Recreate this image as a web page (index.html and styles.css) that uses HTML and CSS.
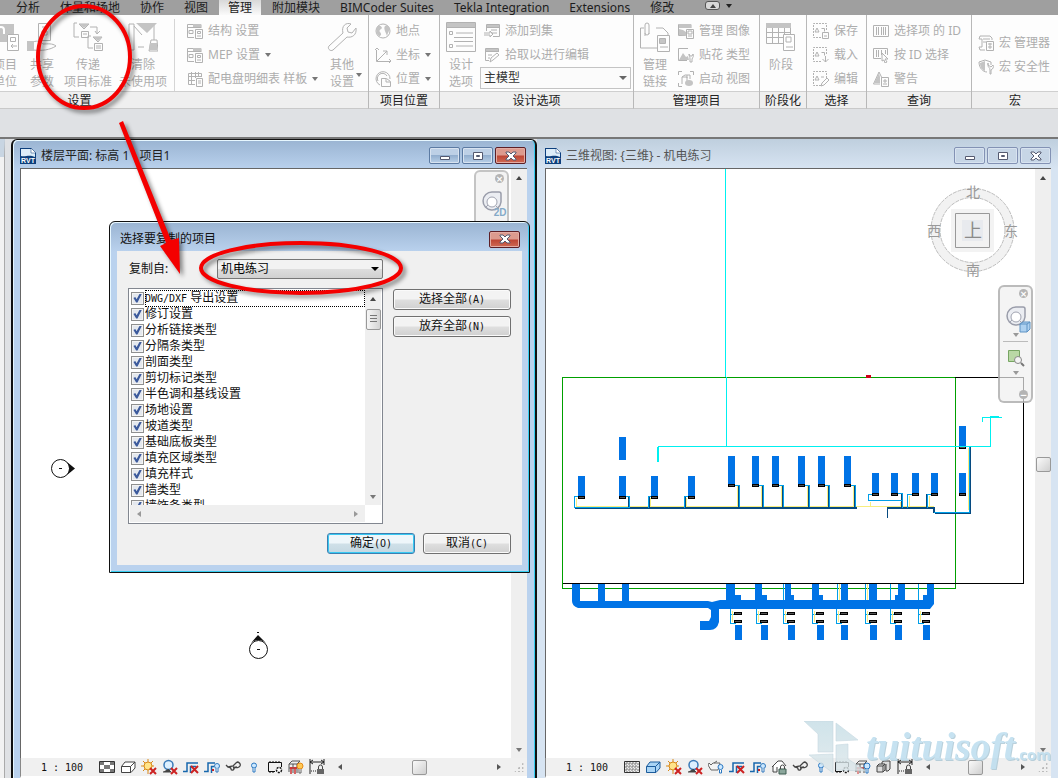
FILE: index.html
```html
<!DOCTYPE html>
<html lang="zh-CN">
<head>
<meta charset="utf-8">
<title>机电练习</title>
<link rel="stylesheet" href="styles.css">
</head>
<body>
<svg class="defs" aria-hidden="true">
  <defs>
    <linearGradient id="mark" x1="0" y1="0" x2="0" y2="1"><stop offset="0" stop-color="#c4dde6"/><stop offset="1" stop-color="#dde7ea"/></linearGradient>
    <!-- ribbon icons -->
    <symbol id="r-units" viewBox="0 0 30 30"><path class="gf" d="M2 2h22v18H2z"/><path class="w" d="M7 12V8a4 4 0 0 1 8 0v4h-2V8a2 2 0 0 0-4 0v4zM17 12h12v17H17z"/><path class="g" d="M17.500 12.500h11v16h-11zM20.500 15.500h5v4h-5zM27 24h-6m2-2-2 2 2 2"/></symbol>
    <symbol id="r-share" viewBox="0 0 30 30"><path class="g" d="M11.500 1.500h12v17h-12zM15 5h5M15 9h5v4h-5zM6 20c5-2 8 0 10 2 5 0 9-1 13 2-6 4-14 5-23 4"/><path class="gf" d="M0 19h7v10H0z"/></symbol>
    <symbol id="r-transfer" viewBox="0 0 30 30"><path class="g" d="M4 1H1v14h5M6 2h10l-5 5zM8.500 9.500h7v6h-7zM10 12h4M17 5h7v6m-2-2 2 3 3-3M18 14h-3v12h5M20 15h9l-4 5zM21.500 21.500h8v7h-8zM23 24h5M23 26h5"/><path class="gf" d="M6 2h10l-5 4zM20 15h9l-4 4z"/></symbol>
    <symbol id="r-purge" viewBox="0 0 30 30"><path class="g" d="M5 2H1v26h5V2zM6 4l8 9M10 25h6M26 2v16M25 18h4l1 11H21l2-11z"/><path class="gf" d="M8 1h21L19 11zM22 21h7v7h-8z"/></symbol>
    <symbol id="r-wrench" viewBox="0 0 30 30"><path class="g" d="M2 24 16 11C14 4 19 0 24 2l-4 4 1 4 4 1 4-5c1 7-4 10-9 9L6 28c-3 2-6-2-4-4z"/></symbol>
    <symbol id="r-list" viewBox="0 0 30 30"><path class="g" d="M.5.5h29v29H.5zM1 5.500h28M3.500 9.500h3v3h-3zM3.500 22.500h3v3h-3zM10 11h17M8 15.500h19M8 19.500h19M10 24h17"/><path class="gf" d="M1 1h28v4H1z"/></symbol>
    <symbol id="r-link" viewBox="0 0 30 30"><path class="g" d="M16 6h7l5 5v3M17 26H.5V6H4M5 14V3a2 2 0 0 1 4 0v9m-4-1a2 2 0 0 0 4 0M17.500 13.500h12v16h-12zM19.500 16.500h6v5h-6zM20 25h8"/><path class="gf" d="M20 17h5v4h-5z"/></symbol>
    <symbol id="r-phase" viewBox="0 0 30 30"><path class="g" d="M.5 1.500h24v20H.5zM1 10.500h23M1 15.500h23M6.500 6v15M12.500 6v15M18.500 6v15"/><path class="gf" d="M0 1h25v5H0z"/><path class="w" d="M17 12h12v17H17z"/><path class="g" d="M17.500 12.500h11v16h-11zM20 15h5v5h-5zM20 25h7"/></symbol>
    <symbol id="i-form" viewBox="0 0 16 16"><path class="g" d="M14 5V1.500H.5v13H7M1 4.500h13M2 7.500h4v3H2zM8.500 6.500h7v9h-7zM10.500 8.500h3v2h-3zM10 13h4"/><path class="gf" d="M6 1h8v3H6z"/></symbol>
    <symbol id="i-table" viewBox="0 0 16 16"><path class="g" d="M8 13.500H1.500v-11h13V6M1 5.500h14M1 9.500h7M4.500 1v12M8.500 1v6M11.500 1v5M9.500 7.500h6v8h-6zM11 10h3M11 12h3"/></symbol>
    <symbol id="i-globe" viewBox="0 0 16 16"><circle class="g" cx="8" cy="8" r="7"/><path class="gf" d="M2 4c3-3 5 0 5 1s-4 2-2 4 1 4-1 4C1 11 1 7 2 4zM13 3c4 3 0 5-1 10-1-4-4-7-2-10 1-1 2-1 3 0z"/></symbol>
    <symbol id="i-axis" viewBox="0 0 16 16"><path class="g" d="M1.500 3v11.500H15M2 14 12 4M8 4h4v4M0 3l2-2 2 2M14 12l2 2-2 2"/></symbol>
    <symbol id="i-place" viewBox="0 0 16 16"><path class="g" d="M5 14A7 7 0 1 1 15 8M3 10a5 5 0 0 1 9-5M6.500 7.500h5l4 3v5h-9zM11 8v3h4"/></symbol>
    <symbol id="i-add" viewBox="0 0 16 16"><path class="g" d="M2.500 8V1.500h13v12H9M3 4.500h12M7 7h6M7 10h6M0 10h6V8l3 3-3 3v-2H0"/><path class="gf" d="M3 2h12v2H3z"/></symbol>
    <symbol id="i-pick" viewBox="0 0 16 16"><path class="g" d="M5 13.500H1.500v-12h13V5M2 4.500h12M4 8h4M4 11h2M6 15l1-4 6-5 2 2-6 5z"/><path class="gf" d="M2 2h12v2H2z"/></symbol>
    <symbol id="i-image" viewBox="0 0 16 16"><path class="g" d="M13 5V1.500H.5v11H7M8.500 6.500h7v9h-7zM10 8h4v3h-4zM10 13h4"/><path class="gf" d="M1 12V6l4 1 3 2v4zM1 1h12v4H1z"/></symbol>
    <symbol id="i-decal" viewBox="0 0 16 16"><path class="g" d="M10 1.500H.5v12H9M11 7c0 3 1 2 1 5v3h2v-3c1-2 2-3 1-5l-1 2h-2z"/><path class="gf" d="m1 13 4-7 3 4 2-1 1 4z"/></symbol>
    <symbol id="i-start" viewBox="0 0 16 16"><path class="g" d="M.5 4V.5H4M12 .5h3.500V4M.5 12v3.500H4M4 13V6l3-2h5v4M4 6h5v5M9 4v3"/><ellipse class="gf" cx="11" cy="12" rx="4" ry="3"/></symbol>
    <symbol id="i-save" viewBox="0 0 16 16"><path class="g" stroke-dasharray="2 1" d="M8 14.500H.5V.5h13V7"/><path class="g" d="m2 9 2-4 2 4zM8.500 5.500h3v3M9.500 9.500h6v6h-6zM11 13h3"/></symbol>
    <symbol id="i-load" viewBox="0 0 16 16"><path class="g" stroke-dasharray="2 1" d="M8 14.500H.5V.5h13V7"/><path class="g" d="m2 9 2-4 2 4zM8.500 5.500h3v3M12.500 9v6m-3-3 3 3 3-3"/></symbol>
    <symbol id="i-edit" viewBox="0 0 16 16"><path class="g" stroke-dasharray="2 1" d="M8 14.500H.5V.5h13V7"/><path class="g" d="m2 9 2-4 2 4zM8 6h3M8 15l1-3 5-5 2 2-5 5z"/></symbol>
    <symbol id="i-id" viewBox="0 0 16 16"><path class="g" d="M.5 2.500h15v11H.5zM3.500 4v8M5.500 4v8M8.500 4v8M10.500 4v8M12.500 4v8"/></symbol>
    <symbol id="i-idsel" viewBox="0 0 16 16"><path class="g" d="M8 11.500H.5v-10h14V8M3.500 3v7M5.500 3v7M8.500 3v5M12.500 3v4M9 6l6 6-3 0 2 3-2 1-1-3-2 1z"/></symbol>
    <symbol id="i-warn" viewBox="0 0 16 16"><path class="g" d="M7 13H.5L6 1l3 6M8.500 6.500h7v9h-7zM11 9h2v2h-2zM10 13h4"/><path class="gf" d="M6 2 1 12h6V6z"/></symbol>
    <symbol id="i-macro" viewBox="0 0 16 16"><path class="g" d="M14 5V3L12 1H2L1 4h3v8H1l1 3h5M5 4h7M5 7h3M8.500 6.500h7v9h-7zM10 9h4M10 12h4M12 8v6"/></symbol>
    <symbol id="i-shield" viewBox="0 0 16 16"><path class="g" d="M9 13c-4 0-8-4-8-10l6-2 6 2v3M10 6c0 3 2 2 2 5v4h1v-4c2-1 3-3 2-5l-2 2z"/><path class="gf" d="M7 2 2 4c0 4 2 7 5 8zM9 4h2v2H9z"/></symbol>
    <!-- view control bar icons -->
    <symbol id="s-detail" viewBox="0 0 16 16"><path d="M.5 2.500h15v11H.5z" fill="#fff" stroke="#333"/><path d="M1 3h4v3H1zm10 0h4v3h-4zM5 6h6v4H5zM1 10h4v3H1zm10 0h4v3h-4z" fill="#777"/></symbol>
    <symbol id="s-fine" viewBox="0 0 16 16"><path d="M.5 2.500h15v11H.5z" fill="#eee" stroke="#333"/><path d="M1 5h14M1 8h14M1 11h14M3 3v10M6 3v10M9 3v10M12 3v10" stroke="#777" stroke-dasharray="2 1"/></symbol>
    <symbol id="s-box" viewBox="0 0 16 16"><path d="M1.500 7.500 5 3h10v6l-4 4.500H1.500zM1.500 7.500h9V13M10.500 7.500 15 3" fill="#fff" stroke="#444"/></symbol>
    <symbol id="s-shade" viewBox="0 0 16 16"><path d="M1.500 7.500 5 3h10v6l-4 4.500H1.500zM1.500 7.500h9V13M10.500 7.500 15 3" fill="#a9d4f5" stroke="#1c5c9c"/></symbol>
    <symbol id="s-sun" viewBox="0 0 16 16"><path d="M7 0v15M0 7h13M2 2l10 10M12 2 2 12" stroke="#d88a1a"/><circle cx="7" cy="7" r="4" fill="#ffe48a" stroke="#d88a1a"/><path d="m9 9 6 6m0-6-6 6" stroke="#c22" stroke-width="2"/></symbol>
    <symbol id="s-shadow" viewBox="0 0 16 16"><circle cx="6.500" cy="6" r="4.500" fill="#dcefff" stroke="#3a7ab8" stroke-width="1.500"/><path d="M1 13h8l-3-3" fill="#444" stroke="#444"/><path d="m9 9 6 6m0-6-6 6" stroke="#c22" stroke-width="2"/></symbol>
    <symbol id="s-crop" viewBox="0 0 16 16"><path d="M0 12.500h4V4h11M7.500 14V7.500H13M4 11V4" fill="none" stroke="#1767ad" stroke-width="1.500"/><path d="m8 7 7 7m0-7-7 7" stroke="#c22" stroke-width="2"/></symbol>
    <symbol id="s-region" viewBox="0 0 16 16"><path d="M0 12.500h4V4h7M7.500 14V7.500H10" fill="none" stroke="#1767ad" stroke-width="1.500"/><circle cx="13" cy="7" r="2.500" fill="#cce8ff" stroke="#3279bd"/><path d="M12 9.500V13h2V9.500" fill="#fff" stroke="#3279bd"/><path d="M8 11h2" stroke="#c22" stroke-width="2"/></symbol>
    <symbol id="s-glasses" viewBox="0 0 16 16"><path d="m1 6 2 2c2 0 3 1 3 2s2 2 3 0 0-2-1-2M12 3c2 0 4 2 3 4s-4 2-5 1M3 8l5-1 4-4M8 9l4-1" fill="none" stroke="#444" stroke-width="1.300"/></symbol>
    <symbol id="s-bulb" viewBox="0 0 16 16"><circle cx="8" cy="6.500" r="2.500" fill="#cce8ff" stroke="#2b78c2"/><path d="M7 9v4h2V9" fill="#fff" stroke="#2b78c2"/></symbol>
    <symbol id="s-temp" viewBox="0 0 16 16"><path d="M8 12.500H1.500v-9h13V8M3 2v2M6 2v2M9 2v2M12 2v2M3 12v2M6 12v2" fill="none" stroke="#111"/><circle cx="12" cy="11" r="2.500" fill="#fff" stroke="#111" stroke-width="1.500" stroke-dasharray="2 1"/></symbol>
    <symbol id="s-analyt" viewBox="0 0 16 16"><path d="M1 13V5l3-3h8L9 5H1m8 0v9M5 5v9M1 9h8" fill="none" stroke="#555"/><path d="M2 9h7M3 8v7M7 8v7" stroke="#c33" stroke-width="1.500"/><circle cx="12" cy="7" r="3" fill="#ffc955" stroke="#e58a16"/><path d="M11 10v4h2v-4" fill="#fff" stroke="#666"/></symbol>
    <symbol id="s-analytb" viewBox="0 0 16 16"><path d="M1 13V5l3-3h8L9 5H1m8 0v9M5 5v9M1 9h8" fill="none" stroke="#555"/><path d="M2 9h7M3 8v7" stroke="#c33"/><circle cx="12" cy="7" r="3" fill="#cce8ff" stroke="#2b78c2"/><path d="M11 10v4h2v-4" fill="#fff" stroke="#2b78c2"/></symbol>
    <symbol id="s-reveal" viewBox="0 0 16 16"><path d="M1 0v15M15 0v6M1 3h14M4 1 1 3l3 2M12 1l3 2-3 2" fill="none" stroke="#222"/><path d="M2 12h5" stroke="#222" stroke-dasharray="1 1"/><path d="M8 10h7v5H8z" fill="#666"/><path d="M9.500 10V8a2 2 0 0 1 4 0v2" fill="none" stroke="#444"/></symbol>
    <symbol id="s-render" viewBox="0 0 16 16"><path d="M3 6 1 4 0 6l3 5h7l2-7H5zM6 4l3-2" fill="#f4f4f4" stroke="#666"/><circle cx="12.500" cy="8" r="2.500" fill="#cce8ff" stroke="#2b78c2"/><path d="M11.500 11v3h2v-3" fill="#fff" stroke="#2b78c2"/></symbol>
    <symbol id="s-lock" viewBox="0 0 16 16"><path d="M2 13V7L1 8l6-6h4l4 5M2 13h4V8" fill="#fff" stroke="#444"/><path d="M8 10h7v5H8z" fill="#8ba69b" stroke="#3d5c50"/><path d="M9.500 10V8a2 2 0 0 1 4 0v2" fill="none" stroke="#444"/></symbol>
    <symbol id="s-set" viewBox="0 0 16 16"><path d="M1 7h6v6H1zM1 7l2-2h6L7 7M7 13l2-2V5M6 5V3l2-1h6v8l-2 2h-2V5" fill="#ddd" stroke="#444"/></symbol>
    <symbol id="rvt" viewBox="0 0 16 16"><path d="M0 0h11l5 5v11H0z" fill="#0d3f7d"/><path d="M1 1h10v4h4v4C9 6 6 9 1 8z" fill="#dcecf8"/><path d="M11 0v5h5z" fill="#fff" stroke="#0d3f7d" stroke-width=".5"/><text x="8" y="14.500" text-anchor="middle" class="rvt-text">RVT</text></symbol>
    <symbol id="wheel" viewBox="0 0 24 24"><path d="M12 2h7q2 0 2 2v8a9 9 0 1 1-9-10z" fill="#ebedf2" stroke="#9a9daa" stroke-width="1.500"/><circle cx="12" cy="12" r="5" fill="#fff" stroke="#a0a3b0"/><path d="m5 18 3-3M16 16l3 3" stroke="#a0a3b0"/></symbol>
    <symbol id="c-min" viewBox="0 0 12 10"><path d="M1.500 5.500h9v3h-9z" class="cap"/></symbol>
    <symbol id="c-max" viewBox="0 0 12 10"><path d="M1.500 1.500h9v7h-9zM4.500 4.500h3v1h-3z" class="cap"/></symbol>
    <symbol id="c-close" viewBox="0 0 12 10"><path d="M1 1h3l2 2 2-2h3v1L8 5l3 3v1H8L6 7 4 9H1V8l3-3-3-3z" class="cap"/></symbol>
    <!-- drawing parts -->
    <g id="t-a"><path class="duct" d="M-4 0h7v20h-7z"/><path class="term" d="M-3.500 20.500h6v2h-6z"/></g>
    <g id="t-b"><path class="duct" d="M-4 0h7v28h-7z"/><path class="term" d="M-3.500 28.500h6v2h-6z"/><path class="hot" d="M5.500 30v20"/><path class="warm" d="M3 29.500h4.500v21"/><path class="cold" d="M6.500 30v21"/></g>
    <g id="t-c"><path class="warm" d="M-7.500 24v15.500h5M-7 30h5"/><path class="hot" d="M-5.500 27v11"/><path class="duct" d="M-3 11h6v14h-6zM-3 41h7v15h-7z"/><path class="term" d="M-3.500 28.500h7v2h-7zM-3.500 36.500h7v2h-7z"/></g>
  </defs>
</svg>

<nav class="tabs">
  <a href="#">分析</a><a href="#">体量和场地</a><a href="#">协作</a><a href="#">视图</a><a href="#" class="on">管理</a><a href="#">附加模块</a><a href="#">BIMCoder Suites</a><a href="#">Tekla Integration</a><a href="#">Extensions</a><a href="#">修改</a>
  <button class="mini" aria-label="最小化功能区"><i class="up"></i></button><i class="down dark"></i>
</nav>

<header class="ribbon">
  <section class="panel">
    <div class="tools first">
      <button class="big"><svg><use href="#r-units"/></svg>项目<br>单位</button>
      <button class="big"><svg><use href="#r-share"/></svg>共享<br>参数</button>
      <button class="big"><svg><use href="#r-transfer"/></svg>传递<br>项目标准</button>
      <button class="big"><svg><use href="#r-purge"/></svg>清除<br>未使用项</button>
      <div class="stack ruled">
        <button class="small"><svg><use href="#i-form"/></svg>结构 设置</button>
        <button class="small"><svg><use href="#i-form"/></svg>MEP 设置<i class="down"></i></button>
        <button class="small"><svg><use href="#i-table"/></svg>配电盘明细表 样板<i class="down"></i></button>
      </div>
      <button class="big menu"><svg><use href="#r-wrench"/></svg>其他<br>设置<i class="down"></i></button>
    </div>
    <h2 class="settings">设置</h2>
  </section>
  <section class="panel">
    <div class="tools">
      <div class="stack">
        <button class="small"><svg><use href="#i-globe"/></svg>地点</button>
        <button class="small"><svg><use href="#i-axis"/></svg>坐标<i class="down"></i></button>
        <button class="small"><svg><use href="#i-place"/></svg>位置<i class="down"></i></button>
      </div>
    </div>
    <h2>项目位置</h2>
  </section>
  <section class="panel">
    <div class="tools">
      <button class="big"><svg><use href="#r-list"/></svg>设计<br>选项</button>
      <div class="stack wide">
        <button class="small"><svg><use href="#i-add"/></svg>添加到集</button>
        <button class="small"><svg><use href="#i-pick"/></svg>拾取以进行编辑</button>
        <span class="combo"><select aria-label="设计选项"><option>主模型</option></select></span>
      </div>
    </div>
    <h2>设计选项</h2>
  </section>
  <section class="panel">
    <div class="tools">
      <button class="big"><svg><use href="#r-link"/></svg>管理<br>链接</button>
      <div class="stack">
        <button class="small"><svg><use href="#i-image"/></svg>管理 图像</button>
        <button class="small"><svg><use href="#i-decal"/></svg>贴花 类型</button>
        <button class="small"><svg><use href="#i-start"/></svg>启动 视图</button>
      </div>
    </div>
    <h2>管理项目</h2>
  </section>
  <section class="panel">
    <div class="tools"><button class="big"><svg><use href="#r-phase"/></svg>阶段</button></div>
    <h2>阶段化</h2>
  </section>
  <section class="panel">
    <div class="tools">
      <div class="stack">
        <button class="small"><svg><use href="#i-save"/></svg>保存</button>
        <button class="small"><svg><use href="#i-load"/></svg>载入</button>
        <button class="small"><svg><use href="#i-edit"/></svg>编辑</button>
      </div>
    </div>
    <h2>选择</h2>
  </section>
  <section class="panel">
    <div class="tools">
      <div class="stack">
        <button class="small"><svg><use href="#i-id"/></svg>选择项 的 ID</button>
        <button class="small"><svg><use href="#i-idsel"/></svg>按 ID 选择</button>
        <button class="small"><svg><use href="#i-warn"/></svg>警告</button>
      </div>
    </div>
    <h2>查询</h2>
  </section>
  <section class="panel">
    <div class="tools">
      <div class="stack middle">
        <button class="small"><svg><use href="#i-macro"/></svg>宏 管理器</button>
        <button class="small"><svg><use href="#i-shield"/></svg>宏 安全性</button>
      </div>
    </div>
    <h2>宏</h2>
  </section>
</header>

<main class="desk">
  <aside class="dock"></aside>

  <section class="win active">
    <header class="caption">
      <svg class="doc"><use href="#rvt"/></svg><h1>楼层平面: 标高 1 - 项目1</h1>
      <button aria-label="最小化"><svg><use href="#c-min"/></svg></button><button aria-label="最大化"><svg><use href="#c-max"/></svg></button><button class="close" aria-label="关闭"><svg><use href="#c-close"/></svg></button>
    </header>
    <div class="client">
      <div class="view">
        <svg class="drawing"><g transform="translate(-21 -169)">
          <g fill="none" stroke="#111"><circle cx="60.500" cy="468.500" r="9"/><circle cx="258.500" cy="649.500" r="9"/><path d="M59 468.500h3M257 649.500h3M257 632.500h2"/></g>
          <path d="m67 462 8 6.500-8 6.500c3-4 3-9 0-13zM251 643l7-8 8 8c-5-4-10-4-15 0z" fill="#111"/>
        </g></svg>
        <div class="navbar flat">
          <button class="x" aria-label="关闭导航栏">×</button>
          <button class="wheel" aria-label="二维控制盘"><svg><use href="#wheel"/></svg><b>2D</b></button>
        </div>
      </div>
      <div class="vscroll"><i class="up"></i><i class="down"></i></div>
    </div>
    <footer class="status">
      <span class="scale">1 : 100</span>
      <svg><use href="#s-detail"/></svg><svg><use href="#s-box"/></svg><svg><use href="#s-sun"/></svg><svg><use href="#s-shadow"/></svg><svg><use href="#s-crop"/></svg><svg><use href="#s-region"/></svg><svg><use href="#s-glasses"/></svg><svg><use href="#s-bulb"/></svg><svg><use href="#s-temp"/></svg><svg><use href="#s-analyt"/></svg><svg><use href="#s-reveal"/></svg>
      <div class="hscroll"><i class="left"></i><b class="thumb"></b><i class="right"></i></div><span class="grip"></span>
    </footer>
  </section>

  <section class="win">
    <header class="caption">
      <svg class="doc"><use href="#rvt"/></svg><h1>三维视图: {三维} - 机电练习</h1>
      <button aria-label="最小化"><svg><use href="#c-min"/></svg></button><button aria-label="最大化"><svg><use href="#c-max"/></svg></button><button aria-label="关闭"><svg><use href="#c-close"/></svg></button>
    </header>
    <div class="client">
      <div class="view">
        <svg class="drawing"><g transform="translate(-546 -169)">
          <g fill="none" shape-rendering="crispEdges">
            <path stroke="#00a000" d="M562.500 377.500h393v211h-393z"/>
            <path stroke="#000" d="M563 583.500h460.500v-206H955"/>
            <path stroke="#00f0f0" d="M725.500 169v208M726.500 377v69.500M658.500 462v-15.500h332v-29M982.500 422v-4.500h19"/>
            <path stroke="#00f0f0" d="M657.500 447v15M990 416.500h9"/>
            <path class="hot" d="M576 506.500h358M576.500 498v8M628.500 498v8M650.500 498v8M686.500 498v8"/>
            <path class="cold" stroke-width="2" d="M575 508h282M887 508h47v5"/>
            <path class="cold" d="M887.500 508v10M628.500 497v10M649.500 497v10M685.500 497v10M901.500 493v15M907.500 494v14M926.500 494v14M970.500 446v67.500h-36"/>
            <path class="warm" d="M579 496.500h-4.500V507h55M625 496.500h4.500V508M653 496.500h-5V508M690 496.500h-5.500V508"/>
            <path class="warm" d="M873 494.500h-4.500v6h33M897 493.500h5V508M912 494.500h-4.500V508M932 494.500h-5V508M934 512.500h35.500v-66h-7"/>
            <path class="hot" d="M900.500 502v5M909.500 496v10M929.500 496v10M968.500 448v62M870.500 502v5"/>
          </g>
          <g shape-rendering="crispEdges">
            <path class="duct" d="M619 437h7v23h-7z"/>
            <use href="#t-a" x="582" y="476"/><use href="#t-a" x="623" y="476"/><use href="#t-a" x="655" y="476"/><use href="#t-a" x="692" y="476"/>
            <use href="#t-b" x="732" y="456"/><use href="#t-b" x="756" y="456"/><use href="#t-b" x="776" y="456"/><use href="#t-b" x="802" y="456"/><use href="#t-b" x="822" y="456"/><use href="#t-b" x="848" y="456"/>
            <use href="#t-a" x="876" y="473"/><use href="#t-a" x="895" y="473"/><use href="#t-a" x="916" y="473"/><use href="#t-a" x="935" y="473"/><use href="#t-a" x="963" y="473"/><use href="#t-a" x="963" y="426"/>
            <path stroke="#00f0f0" d="M950 446.500h40"/>
            <path fill="#d00018" d="M866 375h5v3h-5z"/>
            <use href="#t-c" x="738" y="584"/><use href="#t-c" x="764" y="584"/><use href="#t-c" x="791" y="584"/><use href="#t-c" x="820" y="584"/><use href="#t-c" x="844" y="584"/><use href="#t-c" x="873" y="584"/><use href="#t-c" x="898" y="584"/><use href="#t-c" x="926" y="584"/>
            <path class="warm" fill="none" d="M783.500 584v18M812.500 584v18M837.500 584v18M865.500 584v18M890.500 584v18M918.500 584v18"/>
            <path class="hot" d="M839.500 584v16M867.500 584v16"/>
            <path class="duct" d="M598 584h7v18h-7zM622 584h7v18h-7zM726 584h9v18h-9zM755 584h7v18h-7zM785 584h6v18h-6zM812 584h7v18h-7zM841 584h7v18h-7zM869 584h8v18h-8zM898 584h7v18h-7z"/>
          </g>
          <path class="duct" d="M572 584h8v17h128l4 1 8-2h207V584h7v20l-4 5H719v13q-2 8-9 8h-10v-9h9l2-4v-7l-3-2H578q-6-2-6-7z"/>
          <g class="compass">
            <circle cx="972.500" cy="230" r="37" fill="none" stroke="#f2f2f2" stroke-width="9"/>
            <circle cx="972.500" cy="230" r="41.500"/><circle cx="972.500" cy="230" r="32.500"/>
            <path class="halo" d="M951 209h43v43h-43z"/><path class="face" d="M955.500 213.500h34v34h-34z"/><path class="core" d="M962 220h21v21h-21z"/>
            <text x="973" y="197">北</text><text x="934" y="236">西</text><text x="973" y="275">南</text><text x="1011" y="236">东</text><text class="top" x="973" y="237">上</text>
          </g>
        </g></svg>
        <div class="navbar solid">
          <button class="x" aria-label="关闭导航栏">×</button>
          <button class="wheel" aria-label="全导航控制盘"><svg><use href="#wheel"/></svg><svg class="cube" viewBox="0 0 12 12"><path d="m1 3 3-2h7v7l-3 3H1zM1 3h7v8M8 3l3-2" fill="#aed1f0" stroke="#5e93c4"/></svg></button>
          <i class="down"></i><hr>
          <button class="zoom" aria-label="缩放"><svg viewBox="0 0 18 18"><path d="M1.500 1.500h11v11h-11z" fill="#b9d8a5" stroke="#77a563"/><circle cx="11" cy="11" r="3.500" fill="#f4f4f4" stroke="#888"/><path d="m14 14 3 3" stroke="#777" stroke-width="2"/></svg></button>
          <i class="down"></i>
          <button class="x" aria-label="选项">−</button>
        </div>
      </div>
      <div class="vscroll"><i class="up"></i><b class="thumb"></b><i class="down"></i></div>
    </div>
    <footer class="status">
      <span class="scale">1 : 100</span>
      <svg><use href="#s-fine"/></svg><svg><use href="#s-shade"/></svg><svg><use href="#s-sun"/></svg><svg><use href="#s-shadow"/></svg><svg><use href="#s-render"/></svg><svg><use href="#s-crop"/></svg><svg><use href="#s-region"/></svg><svg><use href="#s-lock"/></svg><svg><use href="#s-glasses"/></svg><svg><use href="#s-bulb"/></svg><svg><use href="#s-temp"/></svg><svg><use href="#s-analytb"/></svg><svg><use href="#s-set"/></svg><svg><use href="#s-reveal"/></svg>
      <div class="hscroll"><i class="left"></i><b class="thumb"></b><i class="right"></i></div><span class="grip"></span>
    </footer>
    <div class="brand"><svg viewBox="0 0 62 52"><path d="M0 0h29v31H14V13zM32 2l22 17-22 1zM5 34l24-1v19zM32 24l12-1v15l18 12-30-1z" fill="url(#mark)" stroke="#b9cfd8" stroke-width=".6"/></svg><span>tuituisoft<small>.com</small></span></div>
  </section>
</main>

<form class="dialog">
  <header class="caption"><h1>选择要复制的项目</h1><button type="button" class="close" aria-label="关闭"><svg><use href="#c-close"/></svg></button></header>
  <div class="sheet">
    <div class="from"><label for="src">复制自:</label><span class="combo"><select id="src"><option>机电练习</option></select></span></div>
    <div class="pick">
      <div class="listbox">
        <div class="items">
          <label class="cur"><input type="checkbox" checked><span><span class="mono">DWG/DXF</span> 导出设置</span></label>
          <label><input type="checkbox" checked><span>修订设置</span></label>
          <label><input type="checkbox" checked><span>分析链接类型</span></label>
          <label><input type="checkbox" checked><span>分隔条类型</span></label>
          <label><input type="checkbox" checked><span>剖面类型</span></label>
          <label><input type="checkbox" checked><span>剪切标记类型</span></label>
          <label><input type="checkbox" checked><span>半色调和基线设置</span></label>
          <label><input type="checkbox" checked><span>场地设置</span></label>
          <label><input type="checkbox" checked><span>坡道类型</span></label>
          <label><input type="checkbox" checked><span>基础底板类型</span></label>
          <label><input type="checkbox" checked><span>填充区域类型</span></label>
          <label><input type="checkbox" checked><span>填充样式</span></label>
          <label><input type="checkbox" checked><span>墙类型</span></label>
          <label><input type="checkbox" checked><span>墙饰条类型</span></label>
        </div>
        <div class="vscroll"><i class="up"></i><b class="thumb"></b><i class="down"></i></div>
        <div class="hscroll"><i class="left"></i><i class="right"></i></div>
      </div>
      <div class="side"><button type="button" class="btn">选择全部<span class="mono">(A)</span></button><button type="button" class="btn">放弃全部<span class="mono">(N)</span></button></div>
    </div>
    <div class="actions"><button type="button" class="btn ok">确定<span class="mono">(O)</span></button><button type="button" class="btn">取消<span class="mono">(C)</span></button></div>
  </div>
</form>

<svg class="notes" aria-hidden="true">
  <g fill="none" stroke="#f40000" stroke-width="4"><ellipse cx="84" cy="57" rx="46" ry="51"/><ellipse cx="301" cy="268" rx="100" ry="25"/></g>
  <path d="m119 123 4-2 48 119 8-2 1 36-20-28 6-3z" fill="#f40000"/>
</svg>
</body>
</html>
```
FILE: styles.css
```css
* { box-sizing: border-box; }
body {
  margin: 0;
  height: 100vh;
  display: flex;
  flex-direction: column;
  overflow: hidden;
  position: relative;
  background: #dfe1e4;
  font: 12px/16px "Noto Sans", "Noto Sans CJK SC", sans-serif;
  color: #222;
}
h1, h2 { margin: 0; font-size: 12px; font-weight: 400; }
button { padding: 0; border: 0; background: none; font: inherit; color: inherit; }
svg { display: block; flex: none; }
.defs { position: absolute; width: 0; height: 0; }
.g { fill: none; stroke: #b2b2b2; }
.gf { fill: #c4c4c4; }
.w { fill: #fff; }
.rvt-text { font: bold 7px "Liberation Sans", sans-serif; fill: #fff; }
.cap { fill: #fff; stroke: #555a70; fill-rule: evenodd; }
.mono { font-family: "DejaVu Sans Mono", monospace; font-size: 10px; }

/* arrows */
.up, .down, .left, .right { flex: none; width: 0; height: 0; border: 3px solid transparent; }
.up { border-top: 0; border-bottom: 4px solid #444; }
.down { border-bottom: 0; border-top: 4px solid #777; }
.left { border-left: 0; border-right: 4px solid #555; }
.right { border-right: 0; border-left: 4px solid #555; }
.down.dark { border-top-color: #222; }

/* tabs */
.tabs {
  flex: none;
  height: 15px;
  padding-left: 7px;
  display: flex;
  align-items: center;
  background: #9f9f9f;
}
.tabs a {
  flex: none;
  height: 15px;
  padding: 0 9px;
  margin-right: 2px;
  line-height: 15px;
  color: #1c1c1c;
  text-decoration: none;
}
.tabs .on { background: linear-gradient(#d8d8d8, #fafafa); }
.mini {
  width: 15px;
  height: 9px;
  margin: 0 6px 4px 20px;
  border: 1px solid #555;
  border-radius: 3px;
  background: #d8d8d8;
  display: grid;
  place-items: center;
}
.tabs > .down { margin-bottom: 4px; }

/* ribbon */
.ribbon {
  flex: none;
  display: grid;
  grid-template-columns: 369fr 71fr 194fr 126fr 47fr 60fr 105fr 86fr;
  margin-bottom: 28px;
  color: #adadad;
}
.panel {
  min-width: 0;
  overflow: hidden;
  background: #fdfdfd;
  border-right: 1px solid #b8b8b8;
  border-bottom: 1px solid #c9c9c9;
}
.panel:last-child { border-right: 0; }
.panel h2 {
  height: 17px;
  line-height: 17px;
  border-top: 1px solid #cfcfcf;
  background: #efefef;
  color: #222;
  text-align: center;
}
.panel .settings { padding-right: 209px; }
.tools { height: 76px; padding: 4px 6px 0; display: flex; gap: 8px; }
.tools.first { gap: 7px; margin-left: -16px; }
.big {
  position: relative;
  flex: none;
  min-width: 30px;
  padding-top: 3px;
  display: block;
  align-self: flex-start;
  line-height: 17px;
  text-align: center;
}
.big svg { width: 30px; height: 30px; margin: 0 auto 4px; }
.big .down { position: absolute; right: -5px; bottom: 13px; }
.stack { display: flex; flex-direction: column; align-items: flex-start; }
.stack.wide { flex: 1; }
.stack.middle { padding-top: 12px; }
.ruled { width: 154px; border-left: 1px solid #d5d5d5; padding-left: 12px; margin-right: -8px; }
.small { height: 24px; display: flex; align-items: center; gap: 5px; white-space: nowrap; }
.stack .small svg { width: 16px; height: 16px; }
.combo { position: relative; display: block; }
.combo select {
  width: 100%;
  appearance: none;
  font: inherit;
  padding: 0 3px;
  border: 1px solid #c4c4c4;
  border-radius: 0;
  background: #fbfbfb;
  color: #333;
}
.combo::after {
  content: "";
  position: absolute;
  right: 4px;
  top: calc(50% - 2px);
  border: 4px solid transparent;
  border-top: 4px solid #666;
  border-bottom: 0;
}
.stack .combo { align-self: stretch; margin: 0 -4px; }
.stack .combo select { height: 22px; }

/* workspace */
.desk {
  flex: 1;
  min-height: 0;
  display: grid;
  grid-template-columns: 11px 526fr 521fr;
  border-top: 2px solid #777;
}
.dock { margin-right: 6px; border-right: 1px solid #aaa; border-top: 18px solid #c8d5e2; background: #f2f2f2; }
.win {
  position: relative;
  min-width: 0;
  min-height: 0;
  display: flex;
  flex-direction: column;
  padding: 0 7px 0 8px;
  background: linear-gradient(#bfcfde, #d7e4f2 30px);
  color: #555;
}
.win.active {
  padding: 0 8px 0 7px;
  border: 2px solid #111;
  border-bottom: 0;
  border-top-width: 1px;
  border-radius: 6px 6px 0 0;
  box-shadow: inset 1px 1px #e7f7ff, inset -1px 0 #35cdf0;
  background: linear-gradient(#9ab4d2, #bad2ee 30px);
  color: #222;
}
.caption { flex: none; height: 29px; padding-top: 4px; display: flex; align-items: center; gap: 2px; }
.win.active .caption { height: 28px; padding-right: 1px; padding-top: 3px; }
.caption h1 { flex: 1; padding-left: 3px; white-space: nowrap; }
.caption .doc { width: 16px; height: 16px; }
.caption button {
  width: 31px;
  height: 17px;
  display: grid;
  place-items: center;
  border: 1px solid #8392b4;
  border-radius: 2px;
  background: #c7d6e6;
  box-shadow: inset 0 0 0 1px #d8e3f0;
}
.caption button svg { width: 12px; height: 10px; }
.win.active .caption button { border-color: #5c7ba3; background: linear-gradient(#bdd0e6 50%, #93afcf 50%, #b9d0e8); }
.win.active .caption .close, .dialog .caption .close {
  border-color: #5d1f26;
  background: linear-gradient(#dc9a8e 48%, #bd4433 52%, #cf6a55);
  box-shadow: inset 0 0 0 1px #e3aca4;
}
.client {
  flex: 1;
  min-height: 0;
  display: flex;
  border: 1px solid #666;
  border-width: 1px 0 0 1px;
  background: #fff;
}
.view { flex: 1; min-width: 0; position: relative; overflow: hidden; }
.drawing { width: 100%; height: 100%; }
.vscroll {
  flex: none;
  width: 16px;
  padding: 7px 0 6px;
  display: flex;
  flex-direction: column;
  align-items: center;
  justify-content: space-between;
  background: #efefef;
}
.thumb {
  width: 15px;
  height: 15px;
  border: 1px solid #999;
  border-radius: 2px;
  background: linear-gradient(135deg, #fafafa, #cfcfcf);
}
.status {
  flex: none;
  height: 20px;
  padding-left: 20px;
  display: flex;
  align-items: center;
  border-bottom: 2px solid #fff;
  border-left: 1px solid #888;
  background: #f0f0f0;
}
.status svg { width: 16px; height: 16px; margin-right: 5px; }
.scale { width: 58px; font: 10px "DejaVu Sans Mono", monospace; color: #111; }
.hscroll { flex: 1; display: flex; align-items: center; justify-content: space-between; }
.status .hscroll { padding: 0 6px 0 8px; }
.grip { width: 18px; height: 10px; margin-left: 2px; background: radial-gradient(#bbb 1px, transparent 1px) 0 0 / 4px 4px; clip-path: polygon(80% 0, 80% 100%, 30% 100%); }

/* navigation bars */
.navbar {
  position: absolute;
  right: 2px;
  width: 35px;
  padding: 2px 3px;
  display: flex;
  flex-direction: column;
  align-items: center;
  border: 2px solid #c4c4c4;
  border-radius: 6px;
  background: rgba(240, 240, 240, .8);
}
.navbar.flat { top: 1px; height: 90px; }
.navbar.solid { top: 116px; height: 118px; background: rgba(240, 240, 240, .7); border-color: rgba(150, 150, 150, .6); }
.navbar .x {
  align-self: flex-end;
  width: 9px;
  height: 9px;
  border-radius: 50%;
  background: #b4b4b4;
  color: #fff;
  font: bold 9px/8px "DejaVu Sans", sans-serif;
}
.navbar .down { border-top-color: #999; margin: 4px 0; }
.navbar hr { width: 100%; margin: 0; border: 0; border-top: 1px solid #bbb; }
.wheel { position: relative; margin-top: 7px; }
.wheel > svg { width: 24px; height: 24px; }
.wheel b { position: absolute; right: -3px; bottom: -4px; font: bold 10px "Liberation Sans", sans-serif; color: #84aac8; }
.wheel .cube { position: absolute; right: -3px; bottom: -4px; width: 12px; height: 12px; }
.navbar .zoom svg { width: 18px; height: 18px; margin-top: 7px; }
.navbar.solid > .x:last-child { margin-top: auto; }

/* drawing */
.duct { fill: #0073e6; }
.term { fill: #555; stroke: #000; stroke-width: 1px; }
.hot { stroke: #f7ee80; fill: none; }
.warm { stroke: #009fe8; fill: none; }
.cold { stroke: #064a80; fill: none; }
.compass circle + circle { fill: none; stroke: #bdbdbd; stroke-dasharray: 4 1; }
.halo { fill: #f3f3f3; }
.face { fill: #f2f2f2; stroke: #999; }
.core { fill: #e8eaee; }
.compass text { font: 14px "Noto Sans CJK SC", sans-serif; fill: #999; text-anchor: middle; }
.compass .top { font-size: 18px; fill: #8a8a8a; }

.win:last-child .vscroll .thumb { margin-bottom: -1px; }
.brand {
  position: absolute;
  left: 267px;
  bottom: 5px;
  display: flex;
  align-items: center;
  color: #b9dcee;
  opacity: .8;
}
.brand svg { width: 62px; height: 52px; }
.brand span { font: italic bold 40px/44px "Liberation Serif", serif; text-shadow: 1px 1px #a9c6d4; }
.brand small { font: bold 15px "Open Sans", sans-serif; }

/* dialog */
.dialog {
  position: absolute;
  left: 109px;
  top: 221px;
  width: 421px;
  padding: 0 7px 7px;
  border: 1px solid #111;
  border-radius: 6px 6px 0 0;
  background: linear-gradient(#9ab4d2, #bad2ee 30px);
  box-shadow: inset 1px 1px #e7f7ff, inset -1px -1px #35cdf0;
  color: #111;
}
.dialog .caption { padding: 5px 2px 0 0; }
.dialog .sheet { background: #f0f0f0; padding: 8px 11px 11px; }
.from { display: flex; align-items: center; margin-bottom: 9px; }
.from label { width: 89px; padding-left: 1px; }
.from .combo { width: 166px; }
.from select { height: 20px; border-color: #777; border-radius: 2px; color: #000; background: linear-gradient(#f2f2f2 50%, #dedede 50%, #d0d0d0); }
.from .combo::after { border-top-color: #000; }
.pick { display: flex; gap: 10px; }
.listbox {
  width: 255px;
  height: 236px;
  padding: 1px;
  display: grid;
  grid-template: 1fr 17px / 1fr 16px;
  border: 1px solid #828790;
  background: #fff;
}
.items { overflow: hidden; padding-left: 1px; }
.items label { height: 16px; display: flex; align-items: center; gap: 1px; white-space: nowrap; }
.items label > span { flex: 1; line-height: 16px; }
.items .cur > span { outline: 1px dotted #000; outline-offset: -1px; }
.items input {
  appearance: none;
  flex: none;
  width: 13px;
  height: 13px;
  margin: 0;
  border: 1px solid #8e8f8f;
  background: #e4e8ee;
  box-shadow: inset 0 0 0 1px #f4f4f4;
}
.items input:checked::after {
  content: "";
  display: block;
  width: 9px;
  height: 9px;
  margin: 1px;
  background: #3c5a9c;
  clip-path: polygon(5% 50%, 25% 40%, 40% 65%, 75% 0, 100% 0, 50% 100%, 35% 100%);
}
.listbox .vscroll { justify-content: flex-start; gap: 8px; }
.listbox .thumb { height: 21px; background: repeating-linear-gradient(#777 0 1px, transparent 1px 3px) 50% 50% / 7px 9px no-repeat, linear-gradient(90deg, #f6f6f6, #d4d4d4); }
.listbox .vscroll .down { margin-top: auto; }
.listbox .hscroll { padding: 0 7px; background: #efefef; }
.listbox .hscroll .left { border-right-color: #999; }
.listbox .hscroll .right { border-left-color: #999; }
.side { flex: 1; display: flex; flex-direction: column; gap: 6px; margin-top: 1px; }
.btn {
  height: 21px;
  border: 1px solid #707070;
  border-radius: 3px;
  background: linear-gradient(#f3f3f3 48%, #dfdfdf 52%, #d0d0d0);
  box-shadow: inset 0 0 0 1px #fafafa;
}
.actions { display: flex; justify-content: flex-end; gap: 8px; margin-top: 9px; }
.actions .btn { width: 88px; }
.btn.ok { border-color: #3c7fb1; box-shadow: inset 0 0 0 1px #38c9f2; background: linear-gradient(#eef6fa 48%, #cfe0e8 52%, #c4d8e2); }

.notes {
  position: absolute;
  left: 0;
  top: 0;
  width: 100%;
  height: 100%;
  pointer-events: none;
  filter: drop-shadow(3px 3px 2px rgba(0, 0, 0, .45));
}
```
